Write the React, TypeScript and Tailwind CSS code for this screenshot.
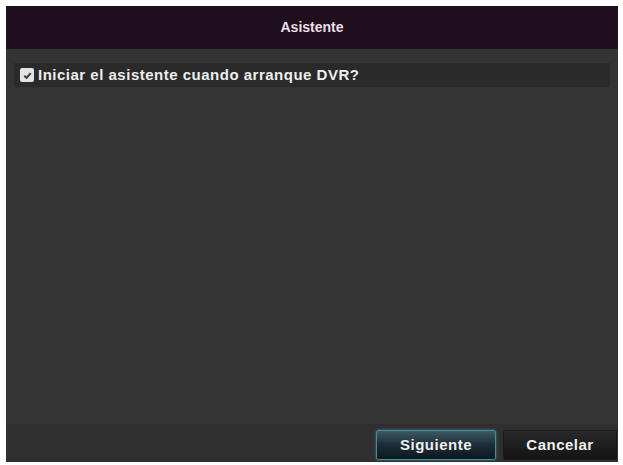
export default function App() {
  return (
    <div
      className="h-[465px] w-[623px] bg-white pl-[6px] pr-[5px] pt-[6px] pb-[3px]"
      style={{ fontFamily: '"Liberation Sans", Arial, sans-serif' }}
    >
      <div className="flex h-full flex-col bg-[#333333]">
        {/* title bar */}
        <div className="flex h-[43px] items-center justify-center bg-[#1f0e1b] text-[14px] font-bold text-[#ecdfea]">
          Asistente
        </div>

        {/* content */}
        <div className="flex-1 px-[8px] pt-[14px]">
          <div className="flex h-[24px] items-center gap-[4px] bg-[#2a2a2a] pl-[6px] text-[15px] font-bold tracking-[0.5px] text-[#eeeeee]">
            <span className="grid size-[14px] place-items-center rounded-[2px] bg-[#e4e4e4]">
              <svg viewBox="0 0 12 12" className="size-[11px]">
                <path
                  d="M2.5 6.3 L5 8.6 L9.5 3.4"
                  fill="none"
                  stroke="#3a3a3a"
                  strokeWidth="2.2"
                />
              </svg>
            </span>
            <span>Iniciar el asistente cuando arranque DVR?</span>
          </div>
        </div>

        {/* footer */}
        <div className="flex h-[38px] items-start justify-end gap-[7px] bg-[#2f2f2f] pr-[1px] pt-[6px]">
          <button className="h-[30px] w-[120px] rounded-[2px] border border-[#4d8a9a] bg-gradient-to-b from-[#3d5b66] via-[#1c2d36] to-[#0c1820] text-[15px] font-bold tracking-[0.5px] text-[#eeeeee] shadow-[0_0_3px_#3a7a8a]">
            Siguiente
          </button>
          <button className="h-[30px] w-[114px] rounded-[2px] border border-[#1a1a1a] bg-gradient-to-b from-[#2a2a2a] to-[#141414] text-[15px] font-bold tracking-[0.5px] text-[#eeeeee]">
            Cancelar
          </button>
        </div>
      </div>
    </div>
  );
}
